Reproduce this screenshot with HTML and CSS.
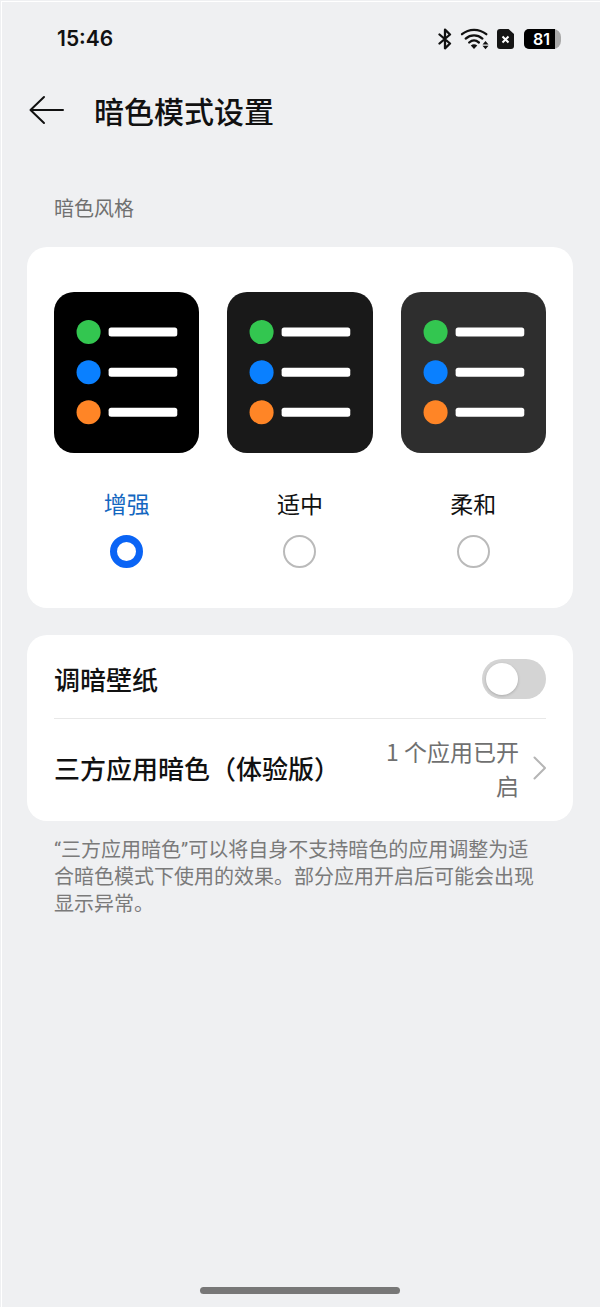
FILE: index.html
```
<!DOCTYPE html>
<html lang="zh-CN">
<head>
<meta charset="utf-8">
<meta name="viewport" content="width=device-width, initial-scale=1">
<title>暗色模式设置</title>
<link rel="stylesheet" href="styles.css">
</head>
<body>
<svg class="defs" width="0" height="0" aria-hidden="true">
  <symbol id="list-art" viewBox="0 0 145 161">
    <circle cx="34.500" cy="40" r="12" fill="#33c650"/>
    <circle cx="34.500" cy="80" r="12" fill="#0a80ff"/>
    <circle cx="34.500" cy="120" r="12" fill="#ff8526"/>
    <g fill="#fff">
      <rect x="54.500" y="35.500" width="68.500" height="9" rx="2.500"/>
      <rect x="54.500" y="75.500" width="68.500" height="9" rx="2.500"/>
      <rect x="54.500" y="115.500" width="68.500" height="9" rx="2.500"/>
    </g>
  </symbol>
</svg>
<div class="page">
  <div class="status">
    <time class="clock">15:46</time>
    <div class="indicators">
      <svg width="14" height="22" viewBox="0 0 14 22" fill="none" stroke="#111" stroke-width="2.300" stroke-linejoin="round" stroke-linecap="round" role="img" aria-label="蓝牙"><path d="M1.500 6.500 12 15.500 7 20.300V1.700L12 6.500 1.500 15.500"/></svg>
      <svg class="wifi" width="30" height="22" viewBox="0 0 30 22" role="img" aria-label="无线网络"><g fill="none" stroke="#111" stroke-width="2.300" stroke-linecap="round"><path d="M2 6.200C9 .3 19 .3 26.300 6.200"/><path d="M5.700 10.600C10.500 6.400 17.500 6.400 22.400 10.600"/><path d="M9.200 14.500C12.300 11.800 15.700 11.800 18.900 14.500"/></g><path d="M10.800 17.500Q14 14.800 17.300 17.500L14 21Z" fill="#111"/><path d="M25.500 13 28.500 16.500H22.500ZM25.500 21.300 22.500 17.800H28.500Z" fill="#111"/></svg>
      <svg class="sim" width="17" height="20" viewBox="0 0 17 20" role="img" aria-label="无SIM卡"><path d="M3 0H11.500L17 5V17Q17 20 14 20H3Q0 20 0 17V3Q0 0 3 0Z" fill="#151515"/><path d="M5.500 7.500 11.500 13.500M11.500 7.500 5.500 13.500" stroke="#fff" stroke-width="2"/></svg>
      <span class="battery"><span class="battery-level">81</span></span>
    </div>
  </div>

  <header class="header">
    <button class="back" type="button" aria-label="返回">
      <svg width="36" height="30" viewBox="0 0 36 30" fill="none" stroke="#111" stroke-width="2" stroke-linecap="round" stroke-linejoin="round"><path d="M34 15H1.500M15 2 1.500 15 15 28"/></svg>
    </button>
    <h1 class="title">暗色模式设置</h1>
  </header>

  <main class="content">
    <h2 class="section-title" id="style-title">暗色风格</h2>
    <div class="card styles" role="radiogroup" aria-labelledby="style-title">
      <label class="style">
        <svg class="thumb thumb-strong" viewBox="0 0 145 161" aria-hidden="true"><use href="#list-art"/></svg>
        <span class="style-name">增强</span>
        <input class="radio" type="radio" name="style" checked>
      </label>
      <label class="style">
        <svg class="thumb thumb-medium" viewBox="0 0 145 161" aria-hidden="true"><use href="#list-art"/></svg>
        <span class="style-name">适中</span>
        <input class="radio" type="radio" name="style">
      </label>
      <label class="style">
        <svg class="thumb thumb-soft" viewBox="0 0 145 161" aria-hidden="true"><use href="#list-art"/></svg>
        <span class="style-name">柔和</span>
        <input class="radio" type="radio" name="style">
      </label>
    </div>

    <div class="card rows">
      <label class="row">
        <span class="row-name">调暗壁纸</span>
        <input class="switch" type="checkbox" role="switch">
      </label>
      <a class="row row-link" href="#apps">
        <span class="row-name">三方应用暗色（体验版）</span>
        <span class="row-value">1 个应用已开启</span>
        <svg class="chevron" width="13" height="24" viewBox="0 0 13 24" fill="none" stroke="#b5b5b5" stroke-width="2" stroke-linecap="round" stroke-linejoin="round"><path d="M1.500 1.500 12 12 1.500 22.500"/></svg>
      </a>
    </div>
    <p class="note">“三方应用暗色”可以将自身不支持暗色的应用调整为适合暗色模式下使用的效果。部分应用开启后可能会出现显示异常。</p>
  </main>
  <div class="home-bar"></div>
</div>
</body>
</html>
```
FILE: styles.css
```
* {
  box-sizing: border-box;
}

body {
  margin: 0;
  padding: 1px 0 0 1px;
  background: #eff0f2;
  color: #111;
  font-family: "Noto Sans CJK SC", sans-serif;
}

.defs {
  position: absolute;
}

.page {
  display: flex;
  flex-direction: column;
  min-height: calc(100vh - 1px);
  padding: 0 27px 13px 25px;
  border-top: 1px solid #fff;
  border-left: 1px solid #fff;
}

.status {
  display: flex;
  align-items: center;
  justify-content: space-between;
  height: 74px;
  padding: 0 12px 0 30px;
}

.clock {
  font: 600 21px/28px Inter, sans-serif;
}

.indicators {
  display: flex;
  align-items: center;
}

.wifi {
  margin-left: 8px;
}

.sim {
  margin-left: 7px;
}

.battery {
  display: flex;
  width: 37px;
  height: 20px;
  margin-left: 10px;
  border-radius: 5px 8px 8px 5px;
  background: #a9a9a9;
}

.battery-level {
  width: 31px;
  padding-left: 4px;
  border-radius: 5px 0 0 5px;
  background: #000;
  color: #fff;
  font: 600 16px/20px Inter, sans-serif;
  text-align: center;
}

.header {
  display: flex;
  align-items: center;
  gap: 29px;
  height: 68px;
}

.back {
  display: flex;
  margin-left: 2px;
  padding: 0;
  border: 0;
  background: none;
}

.title {
  margin: 0;
  font-size: 30px;
  font-weight: 500;
  line-height: 40px;
}

.section-title {
  margin: 49px 27px 24px;
  color: #707070;
  font-size: 20px;
  font-weight: 400;
  line-height: 30px;
}

.card {
  border-radius: 20px;
  background: #fff;
}

.styles {
  display: grid;
  grid-template-columns: repeat(3, 1fr);
  gap: 28px;
  padding: 45px 27px 40px;
}

.style {
  display: flex;
  flex-direction: column;
  align-items: center;
}

.thumb {
  width: 100%;
  border-radius: 20px;
}

.thumb-strong {
  background: #000;
}

.thumb-medium {
  background: #191919;
}

.thumb-soft {
  background: #2e2e2e;
}

.style-name {
  margin: 35px 0 17px;
  font-size: 23px;
  line-height: 30px;
}

.style:has(:checked) .style-name {
  color: #1467c0;
}

.radio {
  width: 33px;
  height: 33px;
  margin: 0;
  border: 2px solid #bababa;
  border-radius: 50%;
  appearance: none;
}

.radio:checked {
  border: 7px solid #0a64f5;
}

.rows {
  margin-top: 27px;
  padding: 0 27px;
}

.row {
  display: flex;
  align-items: center;
  min-height: 83px;
  padding-top: 4px;
}

.row-name {
  flex: none;
  font-size: 26px;
  font-weight: 500;
  line-height: 36px;
}

.switch {
  width: 64px;
  height: 40px;
  margin: 0 0 0 auto;
  padding: 4px;
  border-radius: 20px;
  background: #d4d4d4;
  appearance: none;
}

.switch::before {
  content: "";
  display: block;
  width: 32px;
  height: 32px;
  border-radius: 50%;
  background: #fff;
  box-shadow: 0 1px 3px rgb(0 0 0 / 20%);
}

.switch:checked {
  background: #0a64f5;
}

.switch:checked::before {
  margin-left: auto;
}

.row-link {
  min-height: 103px;
  padding: 0 0 4px;
  border-top: 1px solid #e8e8e8;
  color: inherit;
  text-decoration: none;
}

.row-value {
  flex: 1;
  margin: 0 14px 0 30px;
  color: #707070;
  font-size: 23px;
  line-height: 34px;
  text-align: right;
}

.chevron {
  flex: none;
}

.note {
  margin: 16px 34px 0 27px;
  color: #7a7a7a;
  font-family: Roboto, "Noto Sans CJK SC", sans-serif;
  font-size: 20px;
  line-height: 27px;
}

.home-bar {
  align-self: center;
  width: 200px;
  height: 7px;
  margin-top: auto;
  border-radius: 4px;
  background: #777;
}
```
